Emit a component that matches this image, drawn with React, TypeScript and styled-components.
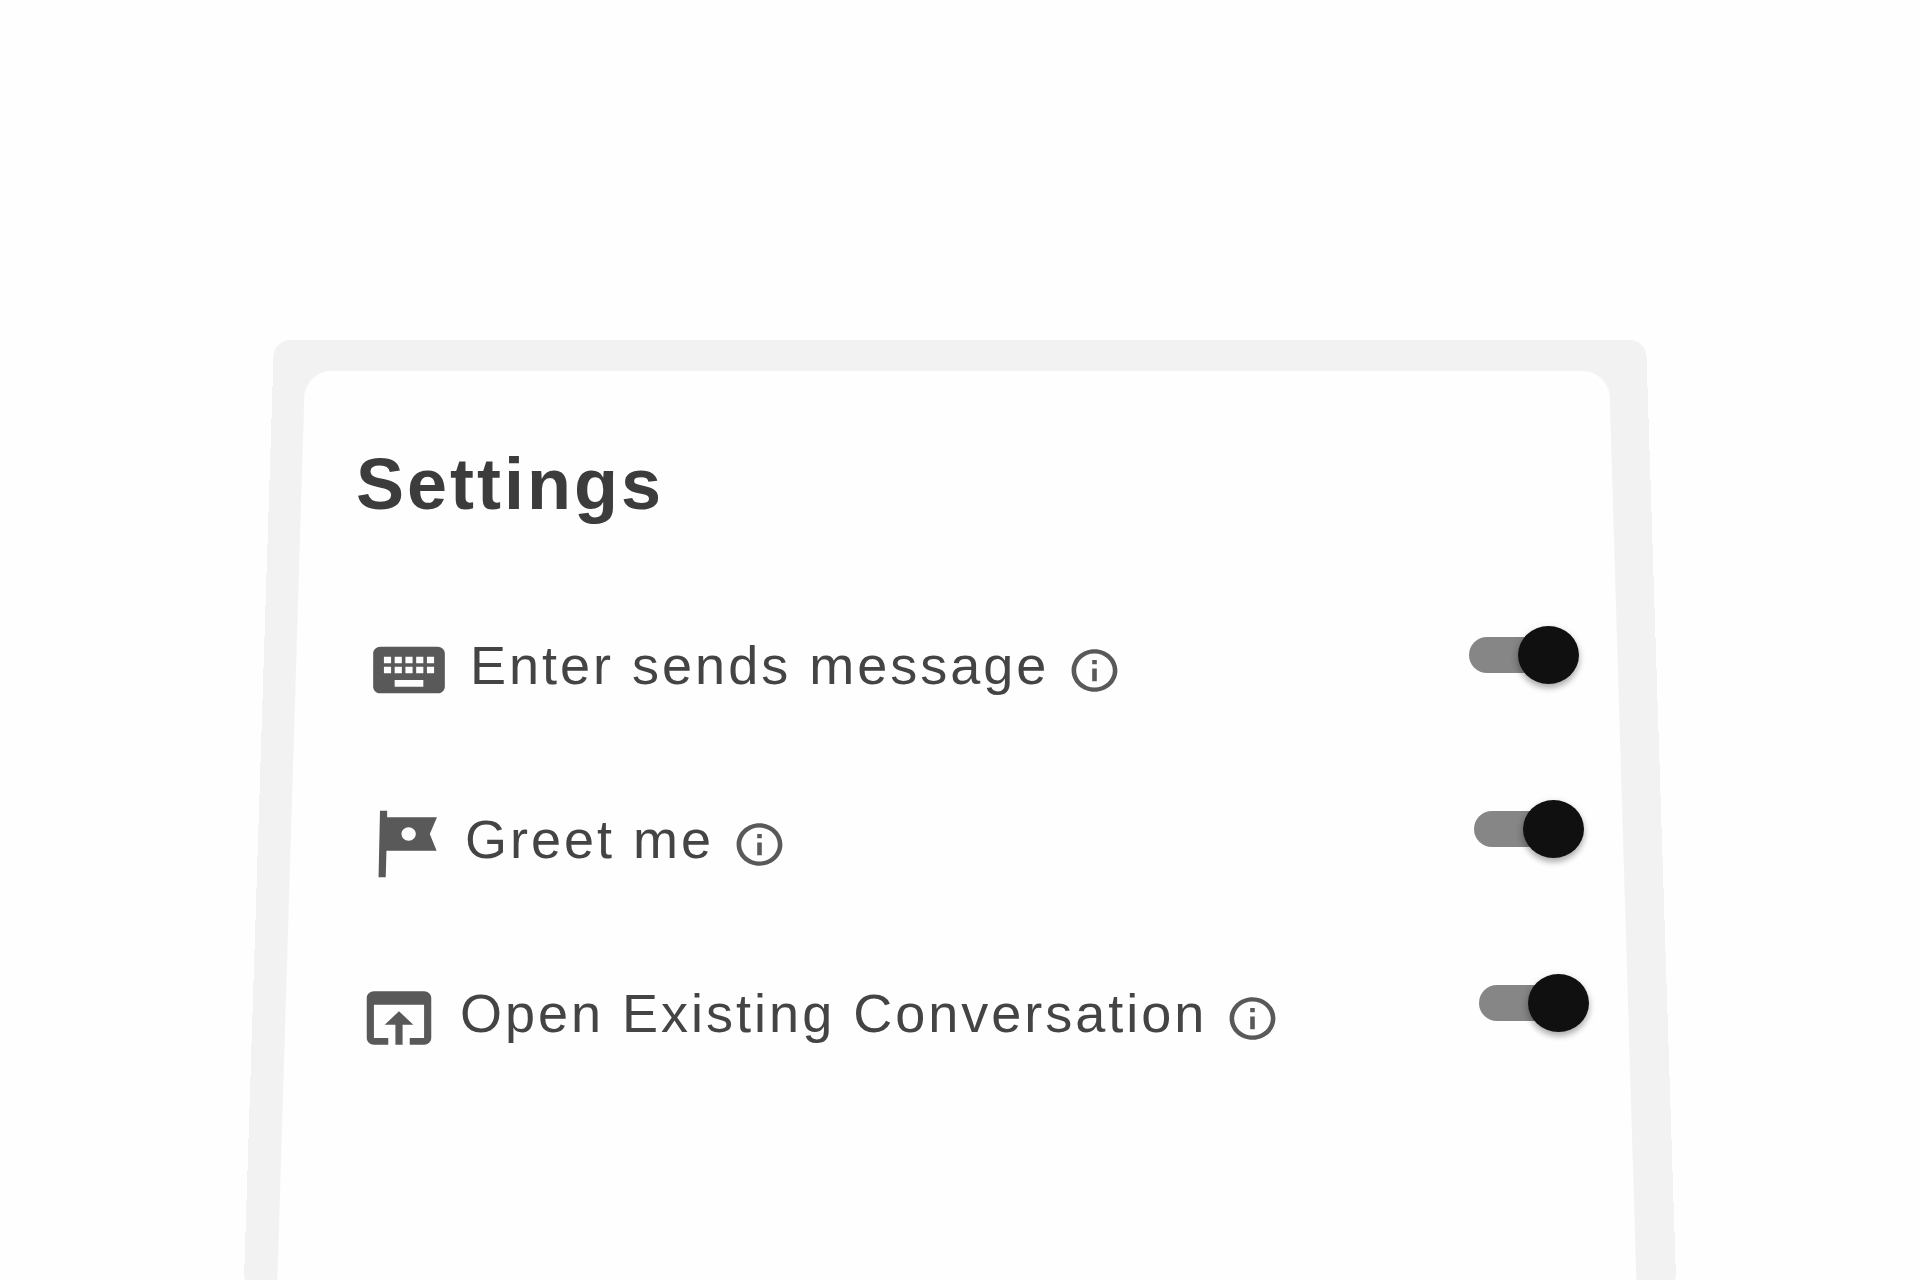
import React, { useId, useState } from 'react';
import styled, { createGlobalStyle } from 'styled-components';

const GlobalStyle = createGlobalStyle`
  *, *::before, *::after { box-sizing: border-box; }
  body {
    margin: 0;
    background: #fefefe;
    color: #444444;
    font-family: "Liberation Sans", Arial, Helvetica, sans-serif;
  }
`;

const Page = styled.main`
  display: flex;
  flex-direction: column;
  align-items: center;
  min-height: 100vh;
  padding-top: 340px;
  overflow: hidden;
`;

const Panel = styled.section`
  position: relative;
  flex: 1;
  display: flex;
  flex-direction: column;
  gap: 102px;
  width: 72%;
  max-width: 1372px;
  padding: 104px 57px 0 82px;
`;

/* Frame behind the content, tilted so that it widens towards the bottom. */
const TiltedFrame = styled.div`
  position: absolute;
  inset: 0 0 26px;
  z-index: -1;
  display: flex;
  padding: 31px 38px 0 32px;
  border-radius: 16px;
  background: #f2f2f2;
  transform: perspective(1880px) rotateX(5deg);
  transform-origin: top center;
`;

const Sheet = styled.div`
  flex: 1;
  border-radius: 26px 26px 0 0;
  background: #fefefe;
`;

const Title = styled.h1`
  margin: 0;
  color: #3c3c3c;
  font-size: 72px;
  line-height: 80px;
  letter-spacing: 3px;
`;

const SettingList = styled.ul`
  display: flex;
  flex-direction: column;
  gap: 90px;
  margin: 0;
  padding: 0;
  list-style: none;
`;

const SettingRow = styled.li<{ $inset: number }>`
  display: flex;
  align-items: flex-start;
  justify-content: space-between;
  padding: 0 ${({ $inset }) => $inset}px;
`;

const Description = styled.div`
  display: flex;
  align-items: center;
  padding-top: 4px;
`;

const RowIcon = styled.svg`
  flex: none;
  width: 86px;
  height: 80px;
  fill: #595959;
`;

const Label = styled.label`
  padding: 0 18px 10px;
  font-size: 54px;
  line-height: 64px;
  letter-spacing: 3px;
`;

const InfoButton = styled.button`
  display: flex;
  padding: 0;
  border: 0;
  background: none;
  cursor: pointer;
`;

const InfoIcon = styled.svg`
  width: 55px;
  height: 51px;
  fill: #595959;
`;

const Switch = styled.input`
  appearance: none;
  flex: none;
  display: grid;
  align-items: center;
  width: 110px;
  height: 58px;
  margin: 0;
  cursor: pointer;

  &::before,
  &::after {
    content: "";
    grid-area: 1 / 1;
  }

  &::before {
    width: 94px;
    height: 36px;
    border-radius: 18px;
    background: #868686;
  }

  &::after {
    justify-self: start;
    width: 61px;
    height: 58px;
    border-radius: 50%;
    background: #101010;
    box-shadow: 0 4px 6px rgba(0, 0, 0, 0.28), 0 2px 10px rgba(0, 0, 0, 0.1);
  }

  &:checked::after {
    justify-self: end;
  }
`;

const settings = [
  {
    label: 'Enter sends message',
    inset: 10,
    icon: 'M20 5H4c-1.1 0-1.99.9-1.99 2L2 17c0 1.1.9 2 2 2h16c1.1 0 2-.9 2-2V7c0-1.1-.9-2-2-2zm-9 3h2v2h-2V8zm0 3h2v2h-2v-2zM8 8h2v2H8V8zm0 3h2v2H8v-2zm-1 2H5v-2h2v2zm0-3H5V8h2v2zm9 7H8v-2h8v2zm0-4h-2v-2h2v2zm0-3h-2V8h2v2zm3 3h-2v-2h2v2zm0-3h-2V8h2v2z',
  },
  {
    label: 'Greet me',
    inset: 5,
    icon: 'M21.2 4H7.3V2h-2L4.9 22h2l.2-8H21.1l-1.9-5zm-5.9 5c0 1.1-.9 2-2 2s-2-.9-2-2 .9-2 2-2 2 .9 2 2z',
  },
  {
    label: 'Open Existing Conversation',
    inset: 0,
    icon: 'M19 4H5c-1.11 0-2 .9-2 2v12c0 1.1.89 2 2 2h4v-2H5V8h14v10h-4v2h4c1.1 0 2-.9 2-2V6c0-1.1-.89-2-2-2zm-7 6l-4 4h3v6h2v-6h3l-4-4z',
  },
];

type SettingProps = (typeof settings)[number];

function Setting({ label, inset, icon }: SettingProps) {
  const id = useId();
  const [on, setOn] = useState(true);

  return (
    <SettingRow $inset={inset}>
      <Description>
        <RowIcon viewBox="0 0 24 24" preserveAspectRatio="none" aria-hidden="true">
          <path fillRule="evenodd" d={icon} />
        </RowIcon>
        <Label htmlFor={id}>{label}</Label>
        <InfoButton type="button" aria-label={`About ${label}`}>
          <InfoIcon viewBox="0 0 24 24" preserveAspectRatio="none" aria-hidden="true">
            <path d="M11 7h2v2h-2zm0 4h2v6h-2zm1-9C6.48 2 2 6.48 2 12s4.48 10 10 10 10-4.48 10-10S17.52 2 12 2zm0 18c-4.41 0-8-3.59-8-8s3.59-8 8-8 8 3.59 8 8-3.59 8-8 8z" />
          </InfoIcon>
        </InfoButton>
      </Description>
      <Switch
        id={id}
        type="checkbox"
        role="switch"
        checked={on}
        onChange={(event) => setOn(event.target.checked)}
      />
    </SettingRow>
  );
}

export default function App() {
  return (
    <>
      <GlobalStyle />
      <Page>
        <Panel>
          <TiltedFrame>
            <Sheet />
          </TiltedFrame>
          <Title>Settings</Title>
          <SettingList>
            {settings.map((setting) => (
              <Setting key={setting.label} {...setting} />
            ))}
          </SettingList>
        </Panel>
      </Page>
    </>
  );
}
